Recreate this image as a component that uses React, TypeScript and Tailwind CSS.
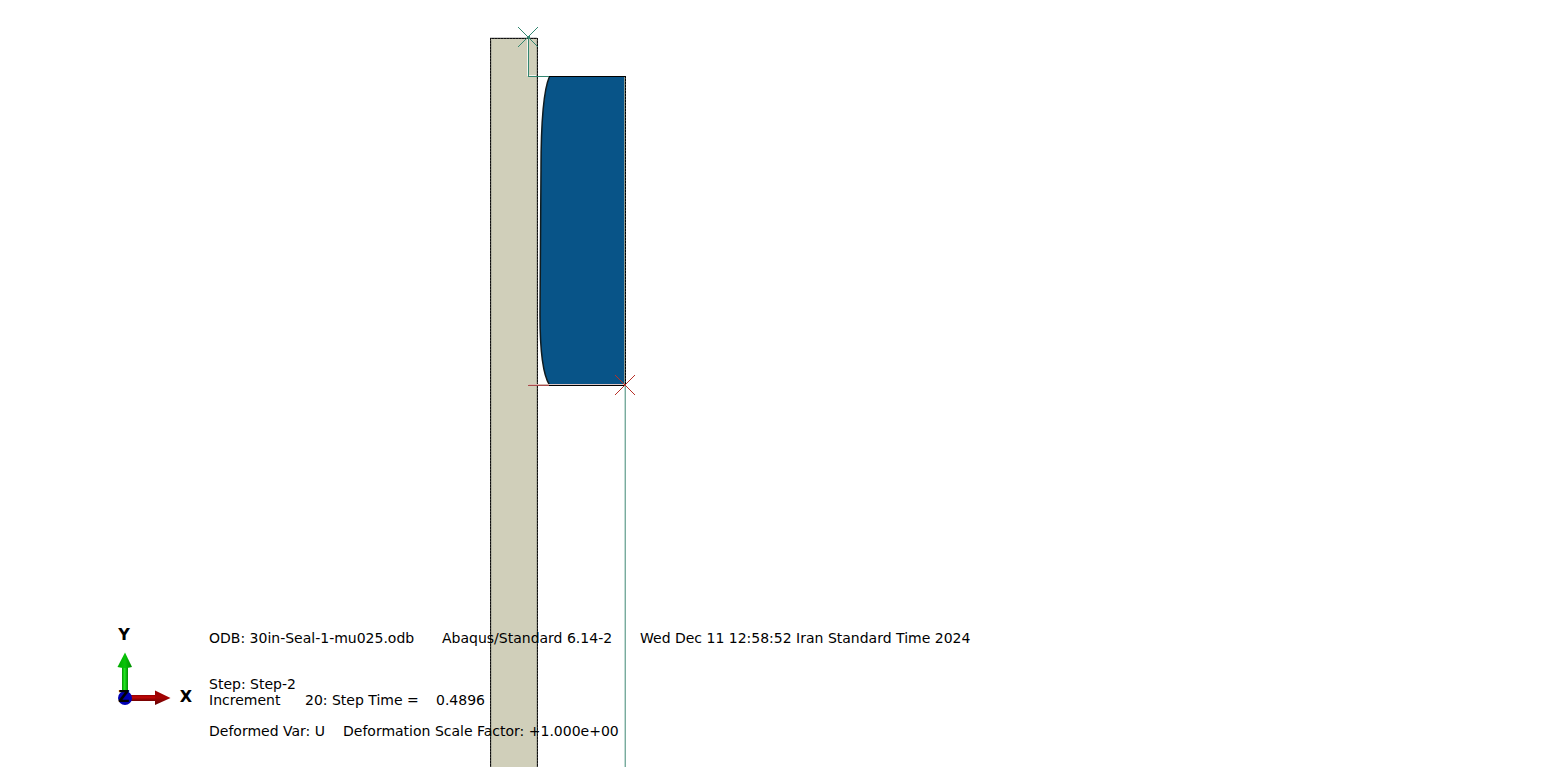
import React from 'react';

function ModelCanvas() {
  return (
    <svg
      role="img"
      aria-label="Deformed seal model"
      className="absolute inset-0 h-full w-full"
      shapeRendering="crispEdges"
      fill="none"
    >
      {/* Casing wall, runs past the bottom of the viewport */}
      <rect x="491" y="38" width="46" height="100%" fill="#d0cfba" />
      <path d="M491.5 40V4000M536.5 40V4000" stroke="#b4b4a4" />
      <path d="M490 37.5H537" stroke="#d0d0d0" />
      <path d="M490.5 4000V38.5H537.5V4000" stroke="#3c3c38" />
      <path d="M490.5 4000V38.5H537.5V4000" stroke="#111" strokeDasharray="2 1" />

      {/* Seal body */}
      <g shapeRendering="auto">
        <path
          d="M549.5 76.5C543 91 541 130 541 170L540 315C540 350 543 375 549.5 385H625V76.5Z"
          fill="#085488"
        />
        <path
          d="M549.5 76.5C543 91 541 130 541 170L540 315C540 350 543 375 549.5 385"
          stroke="#101c20"
          strokeWidth="1.5"
        />
      </g>
      <path d="M624.5 77V384" stroke="#8f9c93" />
      <path d="M549 384.5H624" stroke="#dcc8c8" />
      <path d="M549 76.5H625.5V385.5H549" stroke="#000" />
      <path d="M625.5 78V384" stroke="#3a403c" strokeDasharray="1 2" />

      {/* Constraint lines and reference points */}
      <path d="M527.5 39V76M529 75.5H536" stroke="#f4f4ee" />
      <path d="M528.5 38V76.5H549" stroke="#338670" />
      <path d="M518 27L538 47M538 27L518 47" stroke="#338670" />
      <path d="M527 36.5H530M527 37.5H530" stroke="#338670" />
      <path d="M624.5 386V4000" stroke="#c2dcd5" />
      <path d="M625.5 386V4000" stroke="#7aab9e" />
      <path d="M529 384.5H549" stroke="#d8b8b0" />
      <path d="M528 385.5H549" stroke="#a84b4b" />
      <path d="M615 375L635 395M635 375L615 395" stroke="#b83028" />
    </svg>
  );
}

function AxisTriad() {
  return (
    <svg
      role="img"
      aria-label="View orientation"
      width="100"
      height="90"
      viewBox="100 620 100 90"
      className="shrink-0"
    >
      <defs>
        <linearGradient id="green">
          <stop offset="0" stopColor="#009000" />
          <stop offset="0.4" stopColor="#20e820" />
          <stop offset="1" stopColor="#008c00" />
        </linearGradient>
        <linearGradient id="greenTip">
          <stop offset="0" stopColor="#00a800" />
          <stop offset="0.5" stopColor="#08c408" />
          <stop offset="1" stopColor="#008c00" />
        </linearGradient>
        <linearGradient id="red" x1="0" y1="0" x2="0" y2="1">
          <stop offset="0" stopColor="#900000" />
          <stop offset="0.35" stopColor="#c40808" />
          <stop offset="1" stopColor="#700000" />
        </linearGradient>
        <linearGradient id="redTip" x1="0" y1="0" x2="0" y2="1">
          <stop offset="0" stopColor="#980000" />
          <stop offset="0.5" stopColor="#a40404" />
          <stop offset="1" stopColor="#600000" />
        </linearGradient>
      </defs>
      <rect x="122" y="666" width="6" height="30" fill="url(#green)" />
      <path d="M125 652.5L132 667Q125 669 117.5 667Z" fill="url(#greenTip)" />
      <rect x="131" y="695" width="26" height="6" fill="url(#red)" />
      <path d="M155 690.5L170.5 698L155 705Z" fill="url(#redTip)" />
      <circle cx="125" cy="698" r="7" fill="#0000b4" />
      <g fontFamily="'DejaVu Sans', sans-serif" fontSize="16" fontWeight="bold" textAnchor="middle" fill="#000">
        <text x="124" y="640">Y</text>
        <text x="124" y="702">Z</text>
        <text x="186" y="702">X</text>
      </g>
    </svg>
  );
}

export default function App() {
  return (
    <main className="relative flex min-h-screen flex-col justify-end overflow-hidden bg-white text-black">
      <ModelCanvas />

      <div className="relative flex items-end pb-7 pl-[100px] font-['DejaVu_Sans','Verdana',sans-serif] text-[14px] leading-4 whitespace-pre">
        <div className="mb-[29px] flex w-[109px] shrink-0">
          <AxisTriad />
        </div>

        <div className="flex flex-col">
          <div className="mb-[30px] flex">
            <span className="w-[233px]">ODB: 30in-Seal-1-mu025.odb</span>
            <span className="w-[198px]">Abaqus/Standard 6.14-2</span>
            <span>Wed Dec 11 12:58:52 Iran Standard Time 2024</span>
          </div>
          <p>Step: Step-2</p>
          <div className="mb-[15px] flex">
            <span className="w-24">Increment</span>
            <span className="w-[131px]">20: Step Time =</span>
            <span>0.4896</span>
          </div>
          <div className="flex">
            <span className="w-[134px]">Deformed Var: U</span>
            <span>Deformation Scale Factor: +1.000e+00</span>
          </div>
        </div>
      </div>
    </main>
  );
}
